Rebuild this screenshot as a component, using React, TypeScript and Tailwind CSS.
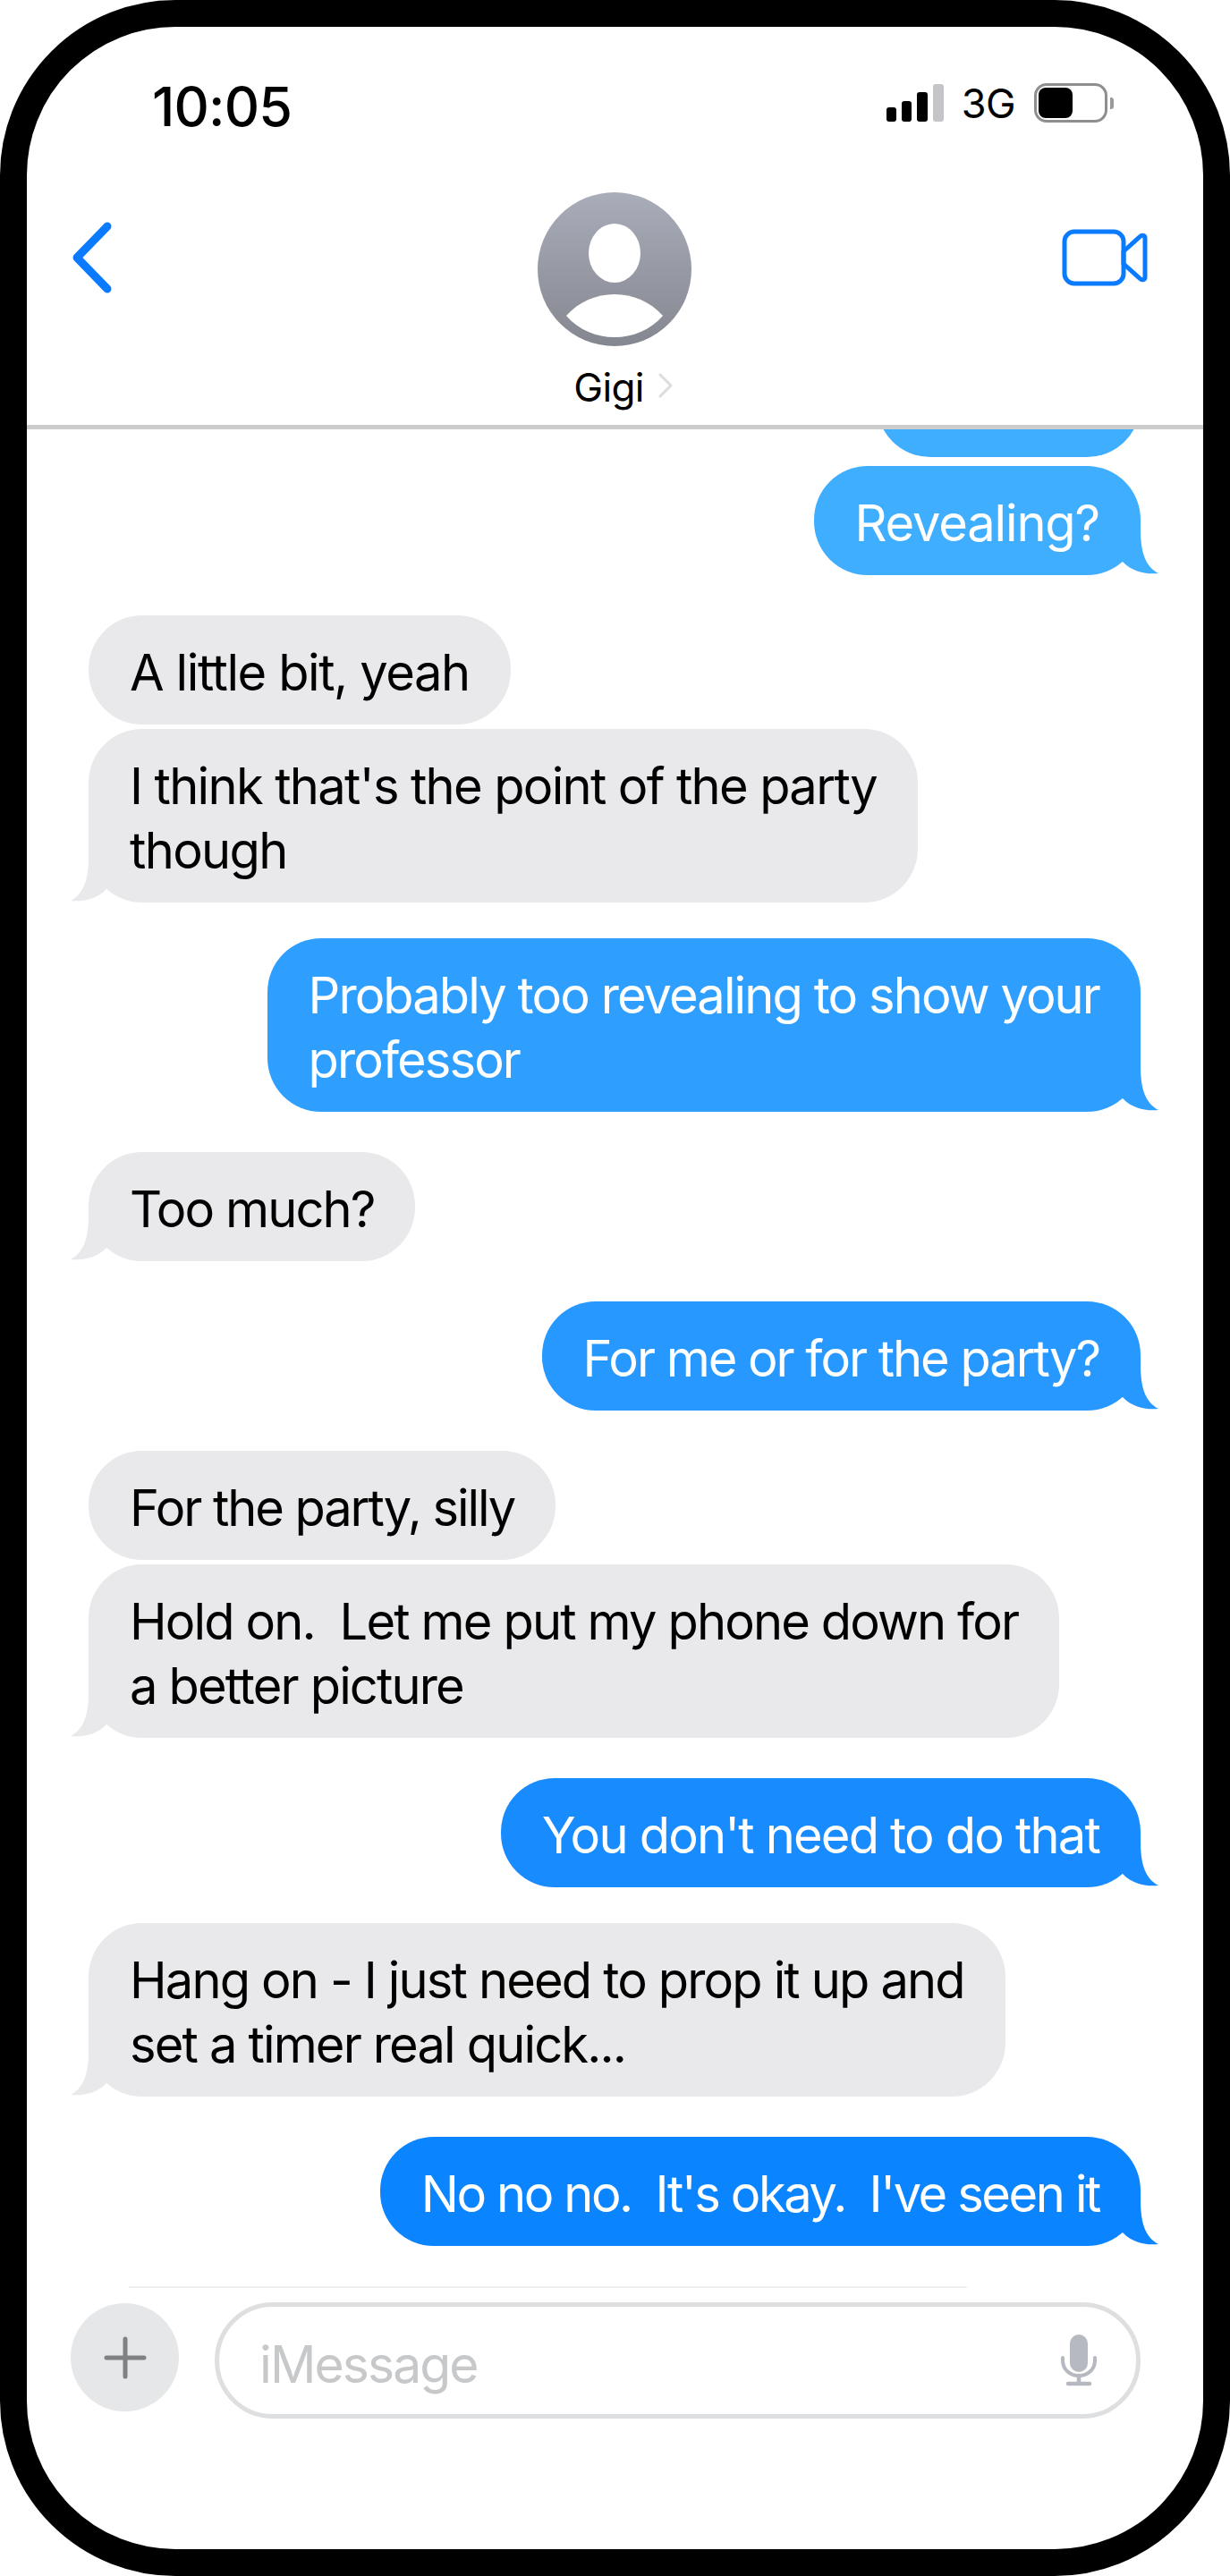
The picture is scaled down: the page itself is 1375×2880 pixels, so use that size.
import React from 'react';

interface Message {
  lines: string[];
  fromMe: boolean;
  tail: boolean;
  gap: string;
  color: string;
  tailColor: string;
  tracking: string;
}

const messages: Message[] = [
  { lines: ['Revealing?'], fromMe: true, tail: true, gap: 'mt-[10px]', color: 'bg-[#40aeff]', tailColor: 'fill-[#40aeff]', tracking: 'tracking-[-1.15px]' },
  { lines: ['A little bit, yeah'], fromMe: false, tail: false, gap: 'mt-[45px]', color: 'bg-[#e9e9eb]', tailColor: 'fill-[#e9e9eb]', tracking: 'tracking-[-1.4px]' },
  { lines: ["I think that's the point of the party", 'though'], fromMe: false, tail: true, gap: 'mt-[5px]', color: 'bg-[#e9e9eb]', tailColor: 'fill-[#e9e9eb]', tracking: 'tracking-[-1.65px]' },
  { lines: ['Probably too revealing to show your', 'professor'], fromMe: true, tail: true, gap: 'mt-[40px]', color: 'bg-[#2f9fff]', tailColor: 'fill-[#2f9fff]', tracking: 'tracking-[-1.9px]' },
  { lines: ['Too much?'], fromMe: false, tail: true, gap: 'mt-[45px]', color: 'bg-[#e9e9eb]', tailColor: 'fill-[#e9e9eb]', tracking: 'tracking-[-1.9px]' },
  { lines: ['For me or for the party?'], fromMe: true, tail: true, gap: 'mt-[45px]', color: 'bg-[#2698ff]', tailColor: 'fill-[#2698ff]', tracking: 'tracking-[-2.03px]' },
  { lines: ['For the party, silly'], fromMe: false, tail: false, gap: 'mt-[45px]', color: 'bg-[#e9e9eb]', tailColor: 'fill-[#e9e9eb]', tracking: 'tracking-[-2.08px]' },
  { lines: ['Hold on.  Let me put my phone down for', 'a better picture'], fromMe: false, tail: true, gap: 'mt-[5px]', color: 'bg-[#e9e9eb]', tailColor: 'fill-[#e9e9eb]', tracking: 'tracking-[-1.85px]' },
  { lines: ["You don't need to do that"], fromMe: true, tail: true, gap: 'mt-[45px]', color: 'bg-[#188cff]', tailColor: 'fill-[#188cff]', tracking: 'tracking-[-1.8px]' },
  { lines: ['Hang on - I just need to prop it up and', 'set a timer real quick...'], fromMe: false, tail: true, gap: 'mt-[40px]', color: 'bg-[#e9e9eb]', tailColor: 'fill-[#e9e9eb]', tracking: 'tracking-[-1.84px]' },
  { lines: ["No no no.  It's okay.  I've seen it"], fromMe: true, tail: true, gap: 'mt-[45px]', color: 'bg-[#0a84ff]', tailColor: 'fill-[#0a84ff]', tracking: 'tracking-[-2.4px]' },
];

const BubbleTail = ({ fromMe, className }: { fromMe: boolean; className: string }) => (
  <svg
    viewBox="0 0 60 60"
    className={`absolute bottom-0 w-[60px] h-[60px] ${fromMe ? 'right-[-20px]' : 'left-[-20px] -scale-x-100'} ${className}`}
  >
    <path d="M40 0 L40 8 C40 34 45 50 60 58 C46 59.5 30 56 20 45 L10 20 Z" />
  </svg>
);

const Bubble = ({ message }: { message: Message }) => (
  <div className={`flex ${message.fromMe ? 'justify-end' : 'justify-start'} ${message.gap}`}>
    <div
      className={`relative rounded-[60px] px-[46px] pt-[28px] pb-[22px] text-[56px] leading-[72px] whitespace-pre ${message.tracking} ${message.color} ${
        message.fromMe ? 'text-white' : 'text-black'
      }`}
    >
      {message.tail && <BubbleTail fromMe={message.fromMe} className={message.tailColor} />}
      <span className="relative">
        {message.lines.map((line) => (
          <span key={line} className="block">
            {line}
          </span>
        ))}
      </span>
    </div>
  </div>
);

const StatusBar = () => (
  <div className="flex items-start justify-between h-[175px] pl-[140px] pr-[107px] pt-[63px]">
    <span className="text-[61px] leading-[44px] mt-[4px] tracking-[-0.8px] font-medium text-black">10:05</span>
    <div className="flex items-start">
      <div className="flex items-end gap-[6px] h-[42px] mt-[1px]">
        <span className="w-[11px] h-[16px] rounded-[3px] bg-black" />
        <span className="w-[11px] h-[23px] rounded-[3px] bg-black" />
        <span className="w-[12px] h-[33px] rounded-[3px] bg-black" />
        <span className="w-[12px] h-[42px] rounded-[3px] bg-[#c4c4c9]" />
      </div>
      <span className="ml-[20px] mr-[21px] mt-[6px] text-[45px] leading-[34px] tracking-[-0.5px] text-black">3G</span>
      <div className="relative w-[82px] h-[44px] rounded-[14px] border-[3px] border-[#8e8e8e] p-[2px]">
        <div className="w-[38px] h-full rounded-[8px] bg-black" />
        <span className="absolute right-[-10px] top-[13px] w-[4px] h-[13px] rounded-r-[3px] bg-[#9a9a9a]" />
      </div>
    </div>
  </div>
);

const NavBar = () => (
  <div className="grid grid-cols-[1fr_auto_1fr] h-[275px] border-b-[5px] border-[#cccccc]">
    <div className="pl-[50px] pt-[43px]">
      <svg width="46" height="80" viewBox="0 0 46 80" fill="none">
        <path d="M40 5 L6 40 L40 75" stroke="#0a7aff" strokeWidth="9" strokeLinecap="round" strokeLinejoin="round" />
      </svg>
    </div>
    <div className="flex flex-col items-center pt-[10px] mr-[2px]">
      <svg width="172" height="172" viewBox="0 0 172 172">
        <defs>
          <linearGradient id="avatarFill" x1="0" y1="0" x2="0" y2="1">
            <stop offset="0" stopColor="#a9adb9" />
            <stop offset="1" stopColor="#858790" />
          </linearGradient>
        </defs>
        <circle cx="86" cy="86" r="86" fill="url(#avatarFill)" />
        <ellipse cx="86" cy="68" rx="29" ry="33" fill="#fff" />
        <path d="M32 138 C46 122 66 114 86 114 C106 114 126 122 140 138 C126 154 106 162 86 162 C66 162 46 154 32 138 Z" fill="#fff" />
      </svg>
      <div className="relative mt-[22px] mr-[12px] text-[44px] leading-[48px] tracking-[-0.7px] text-black">
        Gigi
        <svg className="absolute left-[calc(100%+16px)] top-[8px]" width="17" height="28" viewBox="0 0 17 28" fill="none">
          <path d="M2 2 L14 14 L2 26" stroke="#dddddd" strokeWidth="3" strokeLinecap="round" strokeLinejoin="round" />
        </svg>
      </div>
    </div>
    <div className="flex justify-end pr-[62px] pt-[51px]">
      <svg width="96" height="64" viewBox="0 0 96 64" fill="none" stroke="#0a7aff" strokeWidth="5" strokeLinejoin="round">
        <rect x="3" y="3" width="66" height="58" rx="11" />
        <path d="M69 25 L88 8 C90 6.5 93 7 93 10 L93 54 C93 57 90 57.5 88 56 L69 39 Z" />
      </svg>
    </div>
  </div>
);

const InputBar = () => (
  <div className="relative h-[294px] shrink-0 pl-[49px] pr-[70px] pt-[19px]">
    <div className="absolute left-[114px] top-[0px] h-[2px] w-[937px] rounded-full bg-[#eeeeee]" />
    <div className="flex items-start gap-[40px]">
      <div className="flex items-center justify-center w-[121px] h-[121px] shrink-0 rounded-full bg-[#e6e7e8]">
        <svg width="48" height="48" viewBox="0 0 48 48" stroke="#808184" strokeWidth="5" strokeLinecap="round">
          <path d="M24 3 V45 M3 24 H45" />
        </svg>
      </div>
      <div className="flex flex-1 items-center justify-between h-[130px] -mt-[1px] rounded-full border-[5px] border-[#dedfe0] pl-[45px] pr-[44px]">
        <span className="text-[57px] leading-[64px] mt-[9px] tracking-[-1.9px] text-[#c7c8ca]">iMessage</span>
        <svg width="40" height="58" viewBox="0 0 40 58" fill="none">
          <rect x="10" y="0" width="20" height="42" rx="10" fill="#b6b9c0" />
          <path d="M2 26 V29 C2 39 10 46 20 46 C30 46 38 39 38 29 V26" stroke="#b6b9c0" strokeWidth="4" strokeLinecap="round" />
          <path d="M20 46 V54 M8 55 H32" stroke="#b6b9c0" strokeWidth="4.5" strokeLinecap="round" />
        </svg>
      </div>
    </div>
  </div>
);

export default function App() {
  return (
    <div className="flex flex-col w-[1375px] h-[2880px] overflow-hidden rounded-[196px] border-[30px] border-black bg-white font-['Inter','Liberation_Sans',sans-serif]">
      <StatusBar />
      <NavBar />
      <div className="flex-1 overflow-hidden pl-[69px] pr-[70px]">
        {/* bubble scrolled mostly under the header */}
        <div className="flex justify-end -mt-[91px]">
          <div className="h-[122px] w-[295px] rounded-[60px] bg-[#40aeff]" />
        </div>
        {messages.map((message) => (
          <Bubble key={message.lines[0]} message={message} />
        ))}
      </div>
      <InputBar />
    </div>
  );
}
